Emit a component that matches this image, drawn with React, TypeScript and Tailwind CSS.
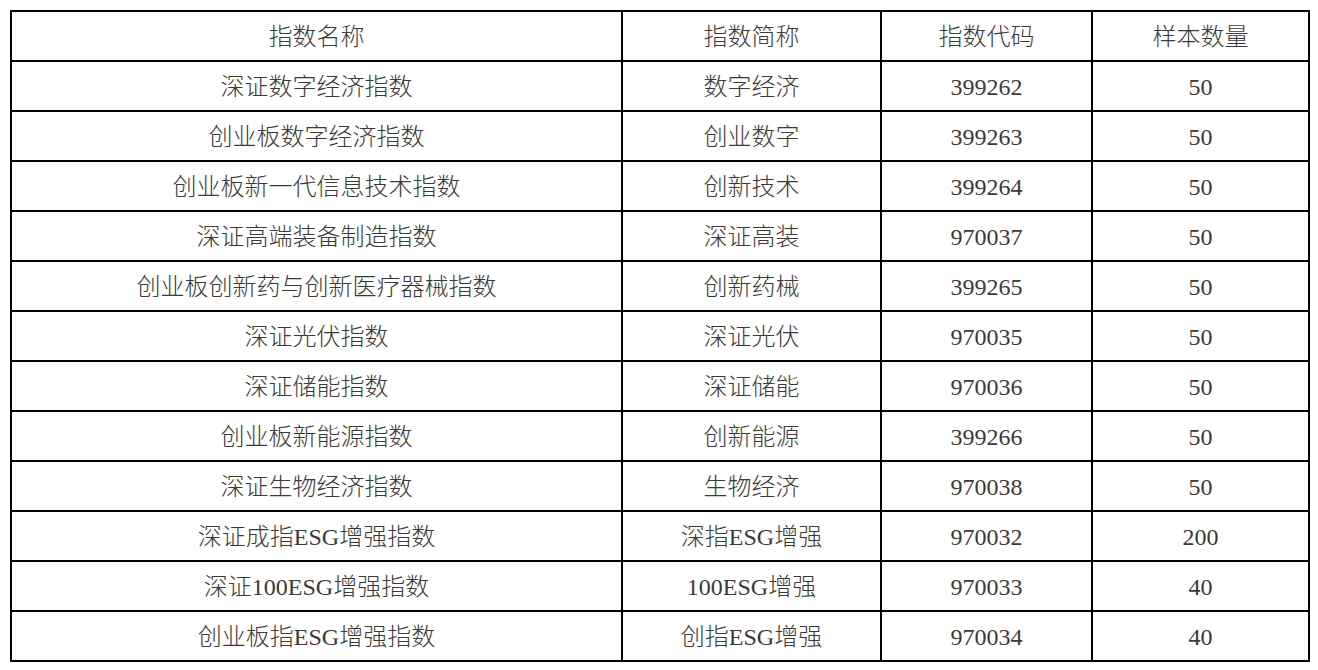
const header = ["指数名称", "指数简称", "指数代码", "样本数量"];

const rows: [string, string, string, string][] = [
  ["深证数字经济指数", "数字经济", "399262", "50"],
  ["创业板数字经济指数", "创业数字", "399263", "50"],
  ["创业板新一代信息技术指数", "创新技术", "399264", "50"],
  ["深证高端装备制造指数", "深证高装", "970037", "50"],
  ["创业板创新药与创新医疗器械指数", "创新药械", "399265", "50"],
  ["深证光伏指数", "深证光伏", "970035", "50"],
  ["深证储能指数", "深证储能", "970036", "50"],
  ["创业板新能源指数", "创新能源", "399266", "50"],
  ["深证生物经济指数", "生物经济", "970038", "50"],
  ["深证成指ESG增强指数", "深指ESG增强", "970032", "200"],
  ["深证100ESG增强指数", "100ESG增强", "970033", "40"],
  ["创业板指ESG增强指数", "创指ESG增强", "970034", "40"],
];

// 라틴 문자(숫자/ESG)는 regular, 한자는 light 로 따로 감싼다
function Cell({ text }: { text: string }) {
  const parts = text.split(/([\x00-\x7F]+)/).filter(Boolean);
  return (
    <div className="flex h-[48px] items-center justify-center bg-white text-[24px] leading-none text-[#3a3a3a]">
      <span className="pt-[1px]">
        {parts.map((p, i) =>
          /^[\x00-\x7F]+$/.test(p) ? (
            <span key={i} className="font-normal">
              {p}
            </span>
          ) : (
            <span key={i} className="font-light">
              {p}
            </span>
          ),
        )}
      </span>
    </div>
  );
}

export default function App() {
  return (
    <div
      className="min-h-screen bg-white pl-[10px] pt-[10px]"
      style={{ fontFamily: '"Liberation Serif", "Noto Sans CJK SC", serif' }}
    >
      <div className="grid w-[1300px] grid-cols-[609px_257px_209px_215px] gap-[2px] bg-black p-[2px]">
        {header.map((h) => (
          <Cell key={h} text={h} />
        ))}
        {rows.map((r) => r.map((c, i) => <Cell key={r[0] + i} text={c} />))}
      </div>
    </div>
  );
}
